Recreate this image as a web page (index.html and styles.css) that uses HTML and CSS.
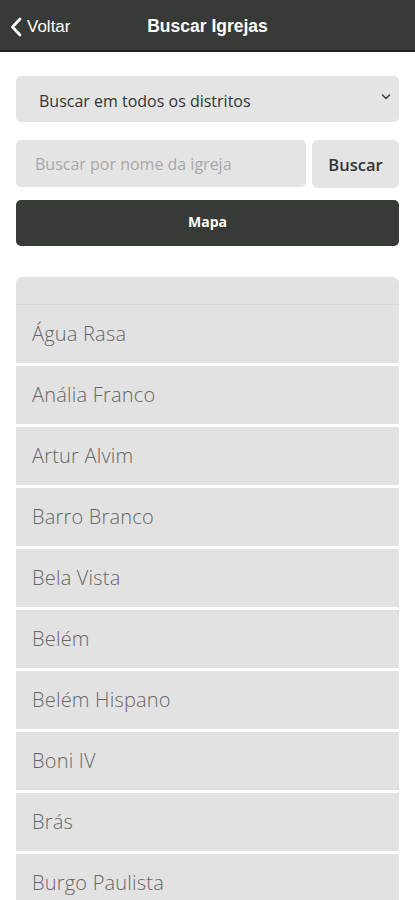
FILE: index.html
```html
<!DOCTYPE html>
<html lang="pt">
<head>
<meta charset="utf-8">
<title>Buscar Igrejas</title>
<link rel="stylesheet" href="styles.css">
</head>
<body>
<header class="topbar">
  <a class="back">
    <svg class="chev" width="12" height="20" viewBox="0 0 12 20"><path d="M10 2 L2.5 10 L10 18" fill="none" stroke="#fff" stroke-width="2.8" stroke-linecap="round" stroke-linejoin="round"/></svg>
    <span>Voltar</span>
  </a>
  <h1 class="title">Buscar Igrejas</h1>
</header>
<main class="content">
  <div class="select">
    <span>Buscar em todos os distritos</span>
    <svg class="caret" width="10" height="6" viewBox="0 0 10 6"><path d="M1.5 1 L5 4.5 L8.5 1" fill="none" stroke="#444" stroke-width="1.6" stroke-linecap="round" stroke-linejoin="round"/></svg>
  </div>
  <div class="search-row">
    <div class="input">Buscar por nome da igreja</div>
    <button class="btn-search">Buscar</button>
  </div>
  <button class="btn-map">Mapa</button>
  <ul class="list">
    <li class="list-head"></li>
    <li class="item">Água Rasa</li>
    <li class="item">Anália Franco</li>
    <li class="item">Artur Alvim</li>
    <li class="item">Barro Branco</li>
    <li class="item">Bela Vista</li>
    <li class="item">Belém</li>
    <li class="item">Belém Hispano</li>
    <li class="item">Boni IV</li>
    <li class="item">Brás</li>
    <li class="item">Burgo Paulista</li>
  </ul>
</main>
</body>
</html>
```

FILE: styles.css
```css
* { box-sizing: border-box; }
html, body { margin: 0; padding: 0; background: #fff; }
body { font-family: "Open Sans", "Noto Sans", sans-serif; overflow: hidden; height: 900px; }

.topbar {
  height: 52px;
  background: #373a36;
  border-bottom: 2px solid #1f211f;
  display: flex;
  align-items: center;
  position: relative;
  font-family: "Liberation Sans", Arial, sans-serif;
  color: #fff;
  padding-top: 3px;
}
.back {
  display: flex;
  align-items: center;
  gap: 5px;
  padding-left: 10px;
  font-size: 17px;
}
.chev { display: block; }
.title {
  position: absolute;
  left: 0; right: 0;
  text-align: center;
  margin: 0;
  font-size: 17.5px;
  font-weight: bold;
  pointer-events: none;
  top: 16px;
}

.content { padding: 24px 16px 0 16px; }

.select {
  height: 46px;
  background: #e4e4e4;
  border-radius: 5px;
  display: flex;
  align-items: center;
  justify-content: space-between;
  padding: 4px 8px 0 23px;
  font-size: 16px;
  color: #333;
}
.caret { margin-top: -8px; }

.search-row {
  display: flex;
  gap: 6px;
  margin-top: 18px;
}
.input {
  flex: 1;
  height: 47px;
  background: #e4e4e4;
  border-radius: 5px;
  display: flex;
  align-items: center;
  padding-left: 19px;
  font-size: 16px;
  color: #a8a8a8;
}
.btn-search {
  width: 87px;
  height: 48px;
  border: none;
  background: #e4e4e4;
  border-radius: 6px;
  font-family: "Open Sans", "Noto Sans", sans-serif;
  font-size: 16.5px;
  font-weight: 600;
  color: #333;
  padding: 0;
}
.btn-map {
  display: block;
  width: 100%;
  height: 46px;
  margin-top: 12px;
  border: none;
  border-radius: 5px;
  background: #373a36;
  color: #fff;
  font-family: "Open Sans", "Noto Sans", sans-serif;
  font-weight: bold;
  font-size: 14px;
  padding: 0 0 3px 0;
}

.list {
  list-style: none;
  margin: 31px 0 0 0;
  padding: 0;
  border-radius: 6px 6px 0 0;
  overflow: hidden;
}
.list-head {
  height: 28px;
  background: #e2e2e2;
  border-bottom: 1px solid #d8d8d8;
}
.item {
  height: 61px;
  background: #e2e2e2;
  border-bottom: 3px solid #fff;
  display: flex;
  align-items: center;
  padding-left: 16px;
  padding-bottom: 2px;
  font-size: 20px;
  font-weight: 300;
  letter-spacing: 0.2px;
  color: #666;
}
```
